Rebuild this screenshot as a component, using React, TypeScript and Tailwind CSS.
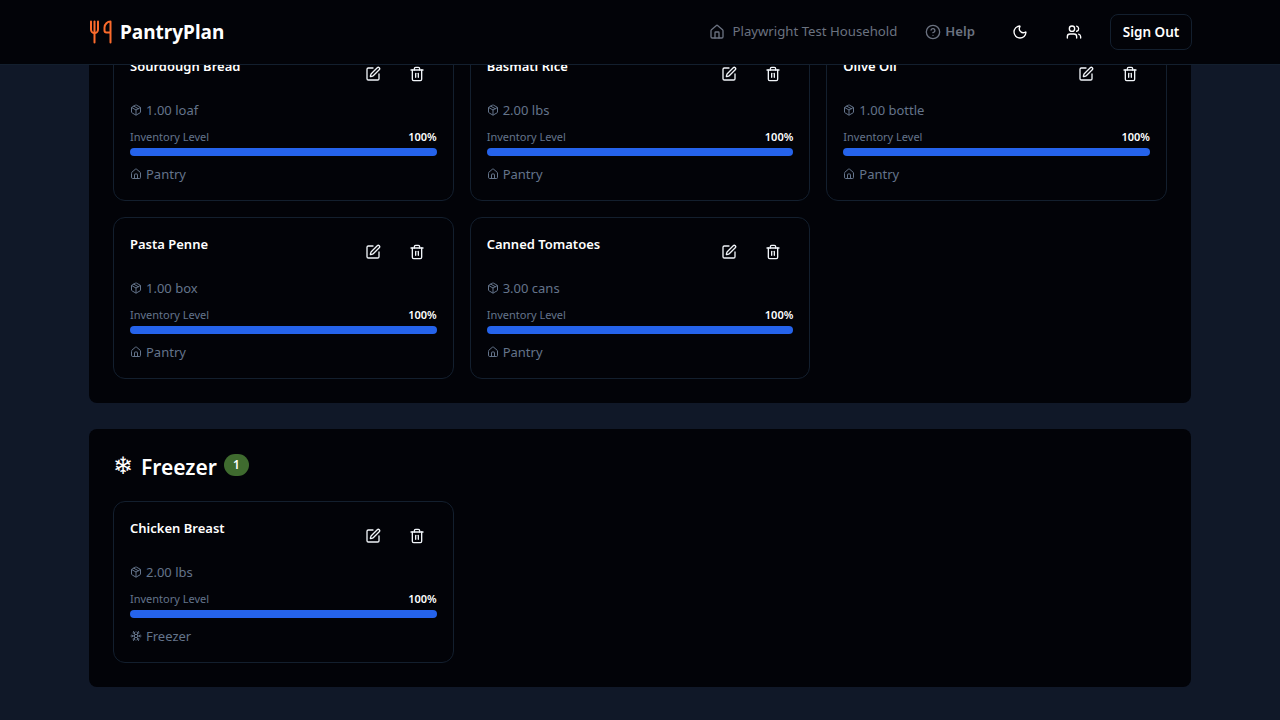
import React, { FC } from 'react';
import { CircleHelp, House, Moon, Package, Snowflake, SquarePen, Trash2, Users } from 'lucide-react';

interface PantryItem {
  name: string;
  quantity: string;
  location: 'Pantry' | 'Freezer';
}

const pantryItems: PantryItem[] = [
  { name: 'Sourdough Bread', quantity: '1.00 loaf', location: 'Pantry' },
  { name: 'Basmati Rice', quantity: '2.00 lbs', location: 'Pantry' },
  { name: 'Olive Oil', quantity: '1.00 bottle', location: 'Pantry' },
  { name: 'Pasta Penne', quantity: '1.00 box', location: 'Pantry' },
  { name: 'Canned Tomatoes', quantity: '3.00 cans', location: 'Pantry' },
];

const freezerItems: PantryItem[] = [{ name: 'Chicken Breast', quantity: '2.00 lbs', location: 'Freezer' }];

const ForkKnife: FC = () => (
  <svg
    width="24"
    height="24"
    viewBox="0 0 24 24"
    fill="none"
    stroke="currentColor"
    strokeWidth="2"
    strokeLinecap="round"
    strokeLinejoin="round"
    className="-ml-px text-[#fb6b2c]"
  >
    <path d="M3 1.5v8a3.5 3.5 0 0 0 7 0v-8" />
    <path d="M6.5 1.5v21" />
    <path d="M22.5 22.5v-21c-3 0-6 2.5-6 6v3a2 2 0 0 0 2 2h4" />
  </svg>
);

const ItemCard: FC<{ item: PantryItem }> = ({ item }) => {
  const LocationIcon = item.location === 'Freezer' ? Snowflake : House;
  return (
    <div className="h-[162px] rounded-xl border border-[#131f2e] bg-[#020308] px-4 pt-4">
      <div className="flex items-start justify-between">
        <div className="text-[13px] leading-5 font-semibold text-white">{item.name}</div>
        <div className="-mr-0.5 flex">
          <button className="flex h-9 w-11 items-center justify-center text-[#f1f5f9]">
            <SquarePen size={16} />
          </button>
          <button className="flex h-9 w-11 items-center justify-center text-[#f1f5f9]">
            <Trash2 size={16} />
          </button>
        </div>
      </div>
      <div className="mt-2 flex items-center gap-1 text-[13px] leading-5 text-[#64748b]">
        <Package size={12} />
        <span>{item.quantity}</span>
      </div>
      <div className="mt-[9px] flex items-center justify-between text-[11px] leading-4">
        <span className="text-[#64748b]">Inventory Level</span>
        <span className="font-semibold text-white">100%</span>
      </div>
      <div className="mt-[3px] h-2 rounded-full bg-[#2563eb]" />
      <div className="mt-2 flex items-center gap-1 text-[13px] leading-5 text-[#64748b]">
        <LocationIcon size={12} />
        <span>{item.location}</span>
      </div>
    </div>
  );
};

const Section: FC<{ title: string; glyph: string; items: PantryItem[] }> = ({ title, glyph, items }) => {
  return (
    <section className="rounded-lg bg-[#020308] p-6">
      <div className="flex h-8 items-center gap-2 pb-1">
        <span className="mb-1 text-2xl leading-8 text-white">{glyph}</span>
        <h2 className="text-[21px] leading-8 font-semibold text-white">{title}</h2>
        <span className="mb-1 -ml-px rounded-full bg-[#3f6b2f] px-[9px] text-xs leading-[22px] font-semibold text-white">
          {items.length}
        </span>
      </div>
      <div className="mt-4 grid grid-cols-3 gap-4">
        {items.map((item) => (
          <ItemCard key={item.name} item={item} />
        ))}
      </div>
    </section>
  );
};

export default function App() {
  return (
    <div className="flex h-screen flex-col overflow-hidden bg-[#101828] font-['Noto_Sans',sans-serif]">
      <header className="z-10 h-[65px] shrink-0 border-b border-[#131f2e] bg-[#020308]">
        <div className="mx-auto flex h-16 w-[1102px] items-center justify-between">
          <div className="flex items-center gap-2">
            <ForkKnife />
            <span className="text-[19px] font-bold text-white">PantryPlan</span>
          </div>
          <div className="flex items-center text-[13.2px]">
            <div className="flex items-center gap-2 text-[#6b7280]">
              <House size={16} />
              <span>Playwright Test Household</span>
            </div>
            <div className="ml-7 flex items-center gap-1 font-semibold text-[#6b7280]">
              <CircleHelp size={16} />
              <span>Help</span>
            </div>
            <Moon size={16} className="ml-[37px] text-white" />
            <Users size={16} className="ml-[38px] text-white" />
            <button className="-mr-px ml-7 h-9 w-[82px] rounded-lg border border-[#131f2e] text-[13.5px] font-semibold text-white">
              Sign Out
            </button>
          </div>
        </div>
      </header>
      <main className="flex min-h-0 flex-1 flex-col justify-end overflow-hidden pb-[33px]">
        <div className="mx-auto flex w-[1102px] flex-col gap-[26px]">
          <Section title="Pantry" glyph="⌂" items={pantryItems} />
          <Section title="Freezer" glyph="❄" items={freezerItems} />
        </div>
      </main>
    </div>
  );
}
